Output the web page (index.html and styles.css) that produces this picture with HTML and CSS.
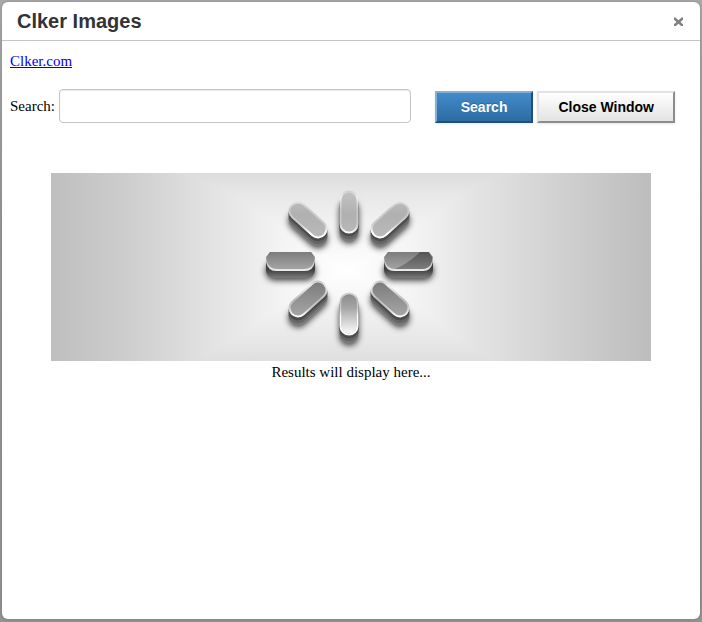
FILE: index.html
```html
<!DOCTYPE html>
<html lang="en">
<head>
    <meta charset="UTF-8">
    <meta name="viewport" content="width=device-width, initial-scale=1.0">
    <title>Clker Images</title>
    <link rel="stylesheet" href="styles.css">
</head>
<body>

<div class="modal" role="dialog" aria-labelledby="modal-title">
    <div class="modal-header">
        <h1 id="modal-title">Clker Images</h1>
        <button class="close" type="button" aria-label="Close">
            <svg width="9" height="9" viewBox="0 0 9 9"><path d="M0 1L9 9M9 1L0 9"/></svg>
        </button>
    </div>

    <div class="modal-body">
        <a class="site-link" href="#">Clker.com</a>

        <form class="search-form">
            <label for="query">Search:</label>
            <input type="text" id="query">
            <div class="buttons">
                <button class="btn btn-primary" type="button">Search</button>
                <button class="btn" type="button">Close Window</button>
            </div>
        </form>

        <div class="results">
            <svg class="loader" viewBox="0 0 600 188">
                <defs>
                    <filter id="blur" x="0" y="0" width="600" height="188" filterUnits="userSpaceOnUse">
                        <feGaussianBlur stdDeviation="3"/>
                    </filter>
                    <linearGradient id="rim-top" gradientUnits="userSpaceOnUse" x1="0" y1="17" x2="0" y2="66">
                        <stop offset="0" stop-color="#c8c8c8"/>
                        <stop offset="0.15" stop-color="#eee"/>
                        <stop offset="0.4" stop-color="#c8c8c8"/>
                        <stop offset="0.7" stop-color="#ccc"/>
                        <stop offset="0.88" stop-color="#fff"/>
                    </linearGradient>
                    <linearGradient id="rim-bottom" gradientUnits="userSpaceOnUse" x1="0" y1="107" x2="0" y2="163">
                        <stop offset="0" stop-color="#bbb"/>
                        <stop offset="0.1" stop-color="#eee"/>
                        <stop offset="0.35" stop-color="#bbb"/>
                        <stop offset="0.5" stop-color="#ccc"/>
                        <stop offset="0.65" stop-color="#fff"/>
                    </linearGradient>
                    <linearGradient id="rim-side" x1="0" y1="0" x2="0" y2="1">
                        <stop offset="0" stop-color="#666"/>
                        <stop offset="0.5" stop-color="#bbb"/>
                        <stop offset="1" stop-color="#eee"/>
                    </linearGradient>
                    <linearGradient id="face-light" gradientUnits="userSpaceOnUse" x1="0" y1="17" x2="0" y2="66">
                        <stop offset="0" stop-color="#c4c4c4"/>
                        <stop offset="0.5" stop-color="#b0b0b0"/>
                        <stop offset="1" stop-color="#bbb"/>
                    </linearGradient>
                    <linearGradient id="face-side" x1="0" y1="0" x2="0" y2="1">
                        <stop offset="0" stop-color="#7c7c7c"/>
                        <stop offset="1" stop-color="#a4a4a4"/>
                    </linearGradient>
                    <linearGradient id="face-shade" x1="0" y1="0" x2="0" y2="1">
                        <stop offset="0" stop-color="#555"/>
                        <stop offset="1" stop-color="#7c7c7c"/>
                    </linearGradient>
                    <linearGradient id="face-dark" gradientUnits="userSpaceOnUse" x1="0" y1="107" x2="0" y2="145">
                        <stop offset="0" stop-color="#7a7a7a"/>
                        <stop offset="1" stop-color="#a8a8a8"/>
                    </linearGradient>
                    <linearGradient id="face-glow" gradientUnits="userSpaceOnUse" x1="0" y1="119" x2="0" y2="163">
                        <stop offset="0" stop-color="#888"/>
                        <stop offset="0.35" stop-color="#a4a4a4"/>
                        <stop offset="0.85" stop-color="#eee"/>
                        <stop offset="1" stop-color="#fff"/>
                    </linearGradient>
                    <linearGradient id="base-side" x1="0" y1="0" x2="0" y2="1">
                        <stop offset="0.65" stop-color="#404040"/>
                        <stop offset="1" stop-color="#7c7c7c"/>
                    </linearGradient>

                    <path id="bars-top" d="M298 27V51M247 38L267 56M349 38L329 56"/>
                    <path id="bars-bottom" d="M298 129V153M267 117L247 135M329 117L349 135"/>
                </defs>

                <!-- shadows -->
                <g class="shadow" filter="url(#blur)">
                    <use href="#bars-top" y="10"/>
                    <use href="#bars-bottom" y="10"/>
                    <path d="M224 98H255M342 98H373"/>
                </g>

                <!-- thickness of the bars -->
                <g class="base">
                    <use class="base-low" href="#bars-top" y="8"/>
                    <use class="base-low" href="#bars-bottom" y="8"/>
                    <use class="base-mid" href="#bars-top" y="6"/>
                    <use class="base-mid" href="#bars-bottom" y="6"/>
                    <use href="#bars-top" y="3"/>
                    <use href="#bars-bottom" y="3"/>
                </g>
                <rect x="215" y="82" width="49" height="23" rx="8" fill="url(#base-side)"/>
                <rect x="333" y="82" width="49" height="23" rx="8" fill="url(#base-side)"/>

                <!-- polished rims -->
                <g class="rim">
                    <use href="#bars-top" stroke="url(#rim-top)"/>
                    <use href="#bars-bottom" stroke="url(#rim-bottom)"/>
                </g>
                <path d="M219 79H260L264 84V89Q262 98 254 98H225Q217 98 215 89V84Z" fill="url(#rim-side)"/>
                <path d="M337 79H378L382 84V89Q380 98 372 98H343Q335 98 333 89V84Z" fill="url(#rim-side)"/>

                <!-- faces -->
                <g class="face">
                    <use href="#bars-top" stroke="url(#face-light)"/>
                    <use href="#bars-bottom" stroke="url(#face-dark)"/>
                    <path d="M298 129V153" stroke="url(#face-glow)"/>
                </g>
                <path d="M220 79H259L263 84V88Q261 96 253 96H226Q218 96 216 88V84Z" fill="url(#face-side)"/>
                <path d="M338 79H377L381 84V88Q379 96 371 96H344Q336 96 334 88V84Z" fill="url(#face-side)"/>
                <path d="M369 79H377L381 84V88Q379 96 371 96H344Q358 90 369 79Z" fill="url(#face-shade)"/>
            </svg>
            <p>Results will display here...</p>
        </div>
    </div>
</div>

</body>
</html>
```
FILE: styles.css
```css
* {
    box-sizing: border-box;
}

body {
    margin: 0;
    padding: 2px 2px 3px;
    min-height: 100vh;
    display: flex;
    background: linear-gradient(#aaa, #999 220px, #949494);
    font-family: "Liberation Serif", "Times New Roman", serif;
    font-size: 15px;
    color: #000;
}

.modal {
    flex: 1;
    background-color: #fff;
    border-radius: 6px;
    box-shadow: 0 0 4px rgba(0, 0, 0, 0.2);
}

.modal-header {
    display: flex;
    justify-content: space-between;
    align-items: center;
    height: 39px;
    padding: 0 15px;
    border-bottom: 1px solid #c4c4c4;
}

.modal-header h1 {
    margin: 0;
    font-family: "Liberation Sans", Arial, sans-serif;
    font-size: 20px;
    line-height: 24px;
    color: #333;
}

.close {
    display: flex;
    padding: 2px;
    border: none;
    background: none;
    cursor: pointer;
}

.close path {
    stroke: #808080;
    stroke-width: 2.5;
}

.modal-body {
    padding: 10px 8px;
}

.site-link {
    display: block;
    width: max-content;
    line-height: 20px;
    color: #00e;
}

.search-form {
    display: flex;
    align-items: center;
    margin: 18px 17px 0 0;
}

.search-form input {
    flex: 1;
    min-width: 0;
    height: 34px;
    margin: 0 24px 0 4px;
    padding: 4px 8px;
    border: 1px solid #c4c4c4;
    border-radius: 4px;
    box-shadow: inset 0 1px 1px rgba(0, 0, 0, 0.08);
    font-size: 14px;
}

.buttons {
    display: flex;
    gap: 4px;
    padding-top: 2px;
}

.btn {
    height: 32px;
    padding: 0 19px;
    border: 2px solid;
    border-color: #e3e3e3 #8c8c8c #8c8c8c #e3e3e3;
    background: linear-gradient(#fff, #e3e3e3);
    box-shadow: 0 1px 2px rgba(0, 0, 0, 0.1);
    font-family: "Liberation Sans", Arial, sans-serif;
    font-size: 14px;
    font-weight: bold;
    color: #000;
    cursor: pointer;
}

.btn-primary {
    padding: 0 24px;
    border-color: #86afd3 #1f4f7b #1f4f7b #86afd3;
    background: linear-gradient(#428bca, #2d6ca2);
    color: #fff;
    text-shadow: 0 -1px 0 rgba(0, 0, 0, 0.2);
}

.results {
    margin-top: 50px;
    text-align: center;
}

.results p {
    margin: 0;
    line-height: 22px;
}

.loader {
    display: block;
    width: 600px;
    max-width: 100%;
    margin: 0 auto;
    background-image:
        linear-gradient(to right, #bfbfbf, #cbcbcb 11%, #dadada 21%, #e3e3e3 27%, #ebebeb 33%, #f3f3f3 38%, #fff 49%, #f3f3f3 61%, #ebebeb 66%, #e3e3e3 71%, #dadada 78%, #cbcbcb 89%, #bdbdbd),
        linear-gradient(#dcdcdc, #e8e8e8 12%, #f1f1f1 26%, #fff 52%, #f1f1f1 74%, #e8e8e8 88%, #dfdfdf);
    background-blend-mode: darken;
}

.loader g {
    fill: none;
    stroke-linecap: round;
}

.shadow {
    stroke: rgba(0, 0, 0, 0.75);
    stroke-width: 19;
}

.base {
    stroke: #4c4c4c;
    stroke-width: 19;
}

.base-mid {
    stroke: #666;
}

.base-low {
    stroke: #7c7c7c;
}

.rim {
    stroke-width: 19;
}

.face {
    stroke-width: 15;
}
```
